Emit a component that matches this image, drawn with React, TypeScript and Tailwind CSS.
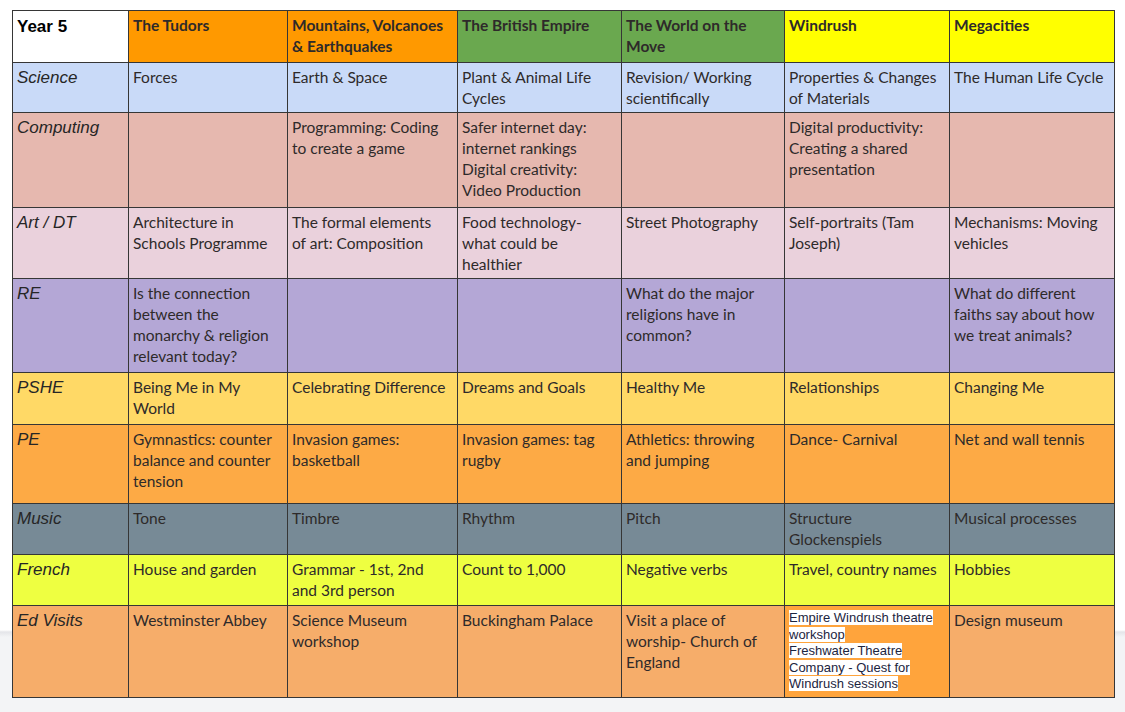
import { Fragment } from "react";

type Row = {
  label: string;
  bg: string;
  cells: string[][];
};

const headerCells: { lines: string[]; bg: string }[] = [
  { lines: ["The Tudors"], bg: "bg-[#ff9900]" },
  { lines: ["Mountains, Volcanoes", "& Earthquakes"], bg: "bg-[#ff9900]" },
  { lines: ["The British Empire"], bg: "bg-[#6aa84f]" },
  { lines: ["The World on the", "Move"], bg: "bg-[#6aa84f]" },
  { lines: ["Windrush"], bg: "bg-[#ffff00]" },
  { lines: ["Megacities"], bg: "bg-[#ffff00]" },
];

const rows: Row[] = [
  {
    label: "Science",
    bg: "bg-[#c9daf8]",
    cells: [
      ["Forces"],
      ["Earth & Space"],
      ["Plant & Animal Life", "Cycles"],
      ["Revision/ Working", "scientifically"],
      ["Properties & Changes", "of Materials"],
      ["The Human Life Cycle"],
    ],
  },
  {
    label: "Computing",
    bg: "bg-[#e6b8af]",
    cells: [
      [],
      ["Programming: Coding", "to create a game"],
      ["Safer internet day:", "internet rankings", "Digital creativity:", "Video Production"],
      [],
      ["Digital productivity:", "Creating a shared", "presentation"],
      [],
    ],
  },
  {
    label: "Art / DT",
    bg: "bg-[#ead1dc]",
    cells: [
      ["Architecture in", "Schools Programme"],
      ["The formal elements", "of art: Composition"],
      ["Food technology-", "what could be", "healthier"],
      ["Street Photography"],
      ["Self-portraits (Tam", "Joseph)"],
      ["Mechanisms: Moving", "vehicles"],
    ],
  },
  {
    label: "RE",
    bg: "bg-[#b4a7d6]",
    cells: [
      ["Is the connection", "between the", "monarchy & religion", "relevant today?"],
      [],
      [],
      ["What do the major", "religions have in", "common?"],
      [],
      ["What do different", "faiths say about how", "we treat animals?"],
    ],
  },
  {
    label: "PSHE",
    bg: "bg-[#ffd966]",
    cells: [
      ["Being Me in My", "World"],
      ["Celebrating Difference"],
      ["Dreams and Goals"],
      ["Healthy Me"],
      ["Relationships"],
      ["Changing Me"],
    ],
  },
  {
    label: "PE",
    bg: "bg-[#fdaa45]",
    cells: [
      ["Gymnastics: counter", "balance and counter", "tension"],
      ["Invasion games:", "basketball"],
      ["Invasion games: tag", "rugby"],
      ["Athletics: throwing", "and jumping"],
      ["Dance- Carnival"],
      ["Net and wall tennis"],
    ],
  },
  {
    label: "Music",
    bg: "bg-[#778a96]",
    cells: [
      ["Tone"],
      ["Timbre"],
      ["Rhythm"],
      ["Pitch"],
      ["Structure", "Glockenspiels"],
      ["Musical processes"],
    ],
  },
  {
    label: "French",
    bg: "bg-[#eeff41]",
    cells: [
      ["House and garden"],
      ["Grammar - 1st, 2nd", "and 3rd person"],
      ["Count to 1,000"],
      ["Negative verbs"],
      ["Travel, country names"],
      ["Hobbies"],
    ],
  },
  {
    label: "Ed Visits",
    bg: "bg-[#f6ad6a]",
    cells: [
      ["Westminster Abbey"],
      ["Science Museum", "workshop"],
      ["Buckingham Palace"],
      ["Visit a place of", "worship- Church of", "England"],
      [],
      ["Design museum"],
    ],
  },
];

// pasted text in the Windrush visits cell keeps its white highlight
const windrushVisits = [
  "Empire Windrush theatre",
  "workshop",
  "Freshwater Theatre",
  "Company - Quest for",
  "Windrush sessions",
];

const body = "font-['Lato','Liberation_Sans',sans-serif] text-[15.5px] leading-[21px] text-[#2e2a2a]";
const label = "font-['Liberation_Sans',Arial,sans-serif] italic text-[17px] leading-[21px] text-[#262626]";

const Lines = ({ lines }: { lines: string[] }) => (
  <>
    {lines.map((l, i) => (
      <div key={i} className="whitespace-nowrap">
        {l}
      </div>
    ))}
  </>
);

export default function App() {
  return (
    <div className="min-h-screen w-full bg-[linear-gradient(to_bottom,#ffffff_630px,#e4e5e9_632px,#f3f4f6_637px)] pt-[10px] pl-[12px]">
      <div className="grid w-max grid-cols-[115px_158px_169px_163px_162px_164px_164px] grid-rows-[51px_49px_94px_70px_93px_51px_78px_50px_50px_91px] gap-px bg-[#363636] p-px">
        {/* header */}
        <div className="bg-white px-1 pt-[5px] font-['Liberation_Sans',Arial,sans-serif] text-[17px] font-bold leading-[21px] text-black">
          Year 5
        </div>
        {headerCells.map((h, i) => (
          <div key={i} className={`${h.bg} px-1 pt-1 ${body} font-bold text-[#1e1a16]`}>
            <Lines lines={h.lines} />
          </div>
        ))}

        {rows.map((row) => (
          <Fragment key={row.label}>
            <div className={`${row.bg} px-1 pt-1 ${label}`}>{row.label}</div>
            {row.cells.map((c, i) =>
              row.label === "Ed Visits" && i === 4 ? (
                <div
                  key={i}
                  className="bg-[#ffa43c] px-1 pt-[4px] font-['Liberation_Sans',Arial,sans-serif] text-[13px] leading-[16.5px] text-[#1c2540]"
                >
                  {windrushVisits.map((l, j) => (
                    <div key={j} className="whitespace-nowrap">
                      <span className="bg-white">{l}</span>
                    </div>
                  ))}
                </div>
              ) : (
                <div key={i} className={`${row.bg} px-1 pt-1 ${body}`}>
                  <Lines lines={c} />
                </div>
              )
            )}
          </Fragment>
        ))}
      </div>
    </div>
  );
}
